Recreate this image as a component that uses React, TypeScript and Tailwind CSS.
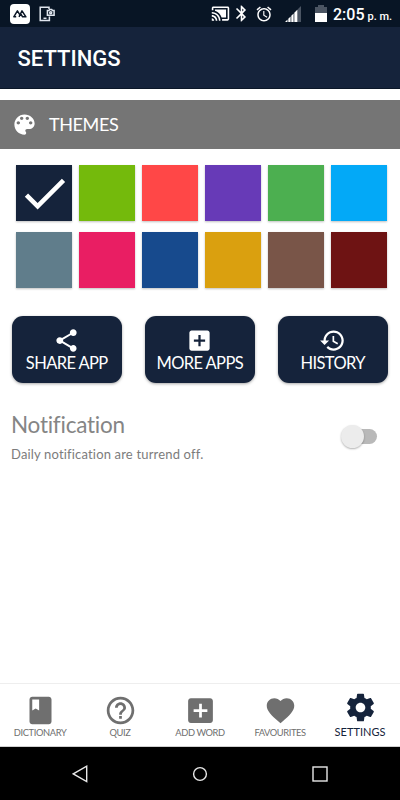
import React from "react";

const paths = {
  palette: "M12 3c-4.97 0-9 4.03-9 9s4.03 9 9 9c.83 0 1.5-.67 1.5-1.5 0-.39-.15-.74-.39-1.01-.23-.26-.38-.61-.38-.99 0-.83.67-1.5 1.5-1.5H16c2.76 0 5-2.24 5-5 0-4.42-4.03-8-9-8zm-5.5 9c-.83 0-1.5-.67-1.5-1.5S5.67 9 6.5 9 8 9.67 8 10.5 7.33 12 6.5 12zm3-4C8.67 8 8 7.33 8 6.5S8.67 5 9.5 5s1.5.67 1.5 1.5S10.33 8 9.5 8zm5 0c-.83 0-1.5-.67-1.5-1.5S13.67 5 14.5 5s1.5.67 1.5 1.5S15.33 8 14.5 8zm3 4c-.83 0-1.5-.67-1.5-1.5S16.67 9 17.5 9s1.5.67 1.5 1.5-.67 1.5-1.5 1.5z",
  share: "M18 16.08c-.76 0-1.44.3-1.96.77L8.91 12.7c.05-.23.09-.46.09-.7s-.04-.47-.09-.7l7.05-4.11c.54.5 1.25.81 2.04.81 1.66 0 3-1.34 3-3s-1.34-3-3-3-3 1.34-3 3c0 .24.04.47.09.7L8.04 9.81C7.5 9.31 6.79 9 6 9c-1.66 0-3 1.34-3 3s1.34 3 3 3c.79 0 1.5-.31 2.04-.81l7.12 4.16c-.05.21-.08.43-.08.65 0 1.61 1.31 2.92 2.92 2.92s2.92-1.31 2.92-2.92-1.31-2.92-2.92-2.92z",
  addBox: "M19 3H5c-1.11 0-2 .9-2 2v14c0 1.1.89 2 2 2h14c1.1 0 2-.9 2-2V5c0-1.1-.9-2-2-2zm-2 10h-4v4h-2v-4H7v-2h4V7h2v4h4v2z",
  history: "M13 3c-4.97 0-9 4.03-9 9H1l3.89 3.89.07.14L9 12H6c0-3.87 3.13-7 7-7s7 3.13 7 7-3.13 7-7 7c-1.93 0-3.68-.79-4.94-2.06l-1.42 1.42C8.27 19.99 10.51 21 13 21c4.97 0 9-4.03 9-9s-4.03-9-9-9zm-1 5v5l4.28 2.54.72-1.21-3.5-2.08V8H12z",
  book: "M18 2H6c-1.1 0-2 .9-2 2v16c0 1.1.9 2 2 2h12c1.1 0 2-.9 2-2V4c0-1.1-.9-2-2-2zM6 4h5v8l-2.5-1.5L6 12V4z",
  help: "M11 18h2v-2h-2v2zm1-16C6.48 2 2 6.48 2 12s4.48 10 10 10 10-4.48 10-10S17.52 2 12 2zm0 18c-4.41 0-8-3.59-8-8s3.59-8 8-8 8 3.59 8 8-3.59 8-8 8zm0-14c-2.21 0-4 1.79-4 4h2c0-1.1.9-2 2-2s2 .9 2 2c0 2-3 1.75-3 5h2c0-2.25 3-2.5 3-5 0-2.21-1.79-4-4-4z",
  heart: "M12 21.35l-1.45-1.32C5.4 15.36 2 12.28 2 8.5 2 5.42 4.42 3 7.5 3c1.74 0 3.41.81 4.5 2.09C13.09 3.81 14.76 3 16.5 3 19.58 3 22 5.42 22 8.5c0 3.78-3.4 6.86-8.55 11.54L12 21.35z",
  settings: "M19.43 12.98c.04-.32.07-.64.07-.98s-.03-.66-.07-.98l2.11-1.65c.19-.15.24-.42.12-.64l-2-3.46c-.12-.22-.39-.3-.61-.22l-2.49 1c-.52-.4-1.08-.73-1.69-.98l-.38-2.65C14.46 2.18 14.25 2 14 2h-4c-.25 0-.46.18-.49.42l-.38 2.65c-.61.25-1.17.59-1.69.98l-2.49-1c-.23-.09-.49 0-.61.22l-2 3.46c-.13.22-.07.49.12.64l2.11 1.65c-.04.32-.07.65-.07.98s.03.66.07.98l-2.11 1.65c-.19.15-.24.42-.12.64l2 3.46c.12.22.39.3.61.22l2.49-1c.52.4 1.08.73 1.69.98l.38 2.65c.03.24.24.42.49.42h4c.25 0 .46-.18.49-.42l.38-2.65c.61-.25 1.17-.59 1.69-.98l2.49 1c.23.09.49 0 .61-.22l2-3.46c.12-.22.07-.49-.12-.64l-2.11-1.65zM12 15.5c-1.93 0-3.5-1.57-3.5-3.5s1.57-3.5 3.5-3.5 3.5 1.57 3.5 3.5-1.57 3.5-3.5 3.5z",
  check: "M9 16.17L4.83 12l-1.42 1.41L9 19 21 7l-1.41-1.41z",
  cast: "M1 18v3h3c0-1.66-1.34-3-3-3zm0-4v2c2.76 0 5 2.24 5 5h2c0-3.87-3.13-7-7-7zm18-7H5v1.63c3.96 1.28 7.09 4.41 8.37 8.37H19V7zM1 10v2c4.97 0 9 4.03 9 9h2c0-6.08-4.93-11-11-11zm20-7H3c-1.1 0-2 .9-2 2v3h2V5h18v14h-7v2h7c1.1 0 2-.9 2-2V5c0-1.1-.9-2-2-2z",
  bluetooth: "M17.71 7.71L12 2h-1v7.59L6.41 5 5 6.41 10.59 12 5 17.59 6.41 19 11 14.41V22h1l5.71-5.71-4.3-4.29 4.3-4.29zM13 5.83l1.88 1.88L13 9.59V5.83zm1.88 10.46L13 18.17v-3.76l1.88 1.88z",
  alarm: "M22 5.72l-4.6-3.86-1.29 1.53 4.6 3.86L22 5.72zM7.88 3.39L6.6 1.86 2 5.71l1.29 1.53 4.59-3.85zM12.5 8H11v6l4.75 2.85.75-1.23-4-2.37V8zM12 4c-4.97 0-9 4.03-9 9s4.02 9 9 9c4.97 0 9-4.03 9-9s-4.03-9-9-9zm0 16c-3.87 0-7-3.13-7-7s3.13-7 7-7 7 3.13 7 7-3.13 7-7 7z",
};

function Icon({ name, className }: { name: keyof typeof paths; className: string }) {
  return (
    <svg viewBox="0 0 24 24" fill="currentColor" className={`block shrink-0 ${className}`}>
      <path d={paths[name]} />
    </svg>
  );
}

function StatusBar() {
  return (
    <div className="flex h-[27px] shrink-0 items-center bg-[#081525] pl-[10px] text-white">
      <svg viewBox="0 0 20 20" className="h-5 w-5 shrink-0">
        <rect width="20" height="20" rx="4" fill="#fff" />
        <path d="M6.2 12.8H3.8L7.4 6.9L9.6 10.4M9 12.8L12 6.9L15.9 12.8H12.6L10.6 9.6" fill="none" stroke="#0b1626" strokeWidth="1.5" strokeLinejoin="round" />
      </svg>
      <svg viewBox="0 0 16 16" className="ml-[9px] h-4 w-4 shrink-0" fill="none" stroke="#dfe5ee" strokeWidth="1.5">
        <path d="M10 3V1.2H1.2V14.6H10.4V10.5" />
        <path d="M4.5 12.3H7.5" />
        <path d="M8.4 4.4H10L10.7 3.4H12.7L13.4 4.4H15.1V9.3H8.4Z" />
        <circle cx="11.7" cy="6.8" r="1" />
      </svg>
      <Icon name="cast" className="ml-[156px] h-[19px] w-[19px]" />
      <Icon name="bluetooth" className="ml-[2px] h-[19px] w-[19px]" />
      <Icon name="alarm" className="ml-[4px] h-[18px] w-[18px]" />
      <svg viewBox="0 0 16 16" className="ml-[12px] h-4 w-4 shrink-0">
        <path d="M13 3L16 0V16H13Z" fill="#4b5563" />
        <path d="M0 16L2.5 13.5V16ZM3.3 12.7L5.6 10.4V16H3.3ZM6.3 9.7L8.6 7.4V16H6.3ZM9.3 6.7L12.5 3.5V16H9.3Z" fill="#fff" />
      </svg>
      <svg viewBox="0 0 12 17" className="ml-[14px] h-[17px] w-3 shrink-0">
        <path d="M0 2H3V0H9V2H12V8H0Z" fill="#4b5563" />
        <path d="M0 8H12V17H0Z" fill="#fff" />
      </svg>
      <span className="ml-[6px] mt-[2px] whitespace-nowrap font-['Roboto'] text-[16px] font-medium leading-none">2:05</span>
      <span className="ml-[3px] mt-[5px] whitespace-nowrap font-['Roboto'] text-[11px] font-medium leading-none">p. m.</span>
    </div>
  );
}

const swatches = [
  "bg-[#15233b]", "bg-[#74ba0c]", "bg-[#ff4747]", "bg-[#673ab7]", "bg-[#4caf50]", "bg-[#03a9f7]",
  "bg-[#607d8b]", "bg-[#e91e63]", "bg-[#174a8d]", "bg-[#daa00f]", "bg-[#795548]", "bg-[#6e1313]",
];

const actions: { icon: keyof typeof paths; label: string }[] = [
  { icon: "share", label: "SHARE APP" },
  { icon: "addBox", label: "MORE APPS" },
  { icon: "history", label: "HISTORY" },
];

const tabs: { icon: keyof typeof paths; label: string; text: string }[] = [
  { icon: "book", label: "DICTIONARY", text: "tracking-[-0.35px]" },
  { icon: "help", label: "QUIZ", text: "tracking-[-0.4px]" },
  { icon: "addBox", label: "ADD WORD", text: "tracking-[-0.4px]" },
  { icon: "heart", label: "FAVOURITES", text: "tracking-[-0.4px]" },
];

export default function App() {
  return (
    <div className="flex h-[800px] w-[400px] flex-col overflow-hidden bg-white font-['Lato',sans-serif] [font-variant-ligatures:none]">
      <StatusBar />
      <header className="flex h-[61.5px] shrink-0 items-center border-b border-[#0b1728] bg-[#15233b] pl-[17.5px] pt-[4px]">
        <h1 className="font-['Roboto'] text-[22px] font-medium leading-none text-white">SETTINGS</h1>
      </header>
      <section className="mt-[11.5px] flex h-[49px] shrink-0 items-center bg-[#757575] text-white">
        <Icon name="palette" className="ml-[11px] h-[27px] w-[27px]" />
        <span className="-mt-[2px] ml-[11px] text-[18px] leading-none tracking-[-0.4px]">THEMES</span>
      </section>
      <div className="mt-4 grid grid-cols-[repeat(6,56px)] gap-x-[7px] gap-y-[11px] pl-4">
        {swatches.map((color, i) => (
          <div key={color} className={`flex h-14 items-center justify-center shadow-[0_1px_2px_rgba(0,0,0,0.25)] ${color}`}>
            {i === 0 && <Icon name="check" className="h-[55px] w-[55px] text-white" />}
          </div>
        ))}
      </div>
      <div className="mt-[27.5px] flex gap-[22.5px] pl-[11.5px]">
        {actions.map((a) => (
          <button key={a.label} className="flex h-[67.5px] w-[110.5px] flex-col items-center rounded-[11px] bg-[#15233b] pt-[11px] text-white shadow-[0_1px_3px_rgba(0,0,0,0.35)]">
            <Icon name={a.icon} className="h-[27px] w-[27px]" />
            <span className="whitespace-nowrap text-[16.5px] leading-[18px] tracking-[-0.6px]">{a.label}</span>
          </button>
        ))}
      </div>
      <div className="mt-[26.5px] flex justify-between pl-[11px] pr-[23px]">
        <div className="text-[#7c7c7c]">
          <h2 className="text-[22.5px] leading-[30px] tracking-[-0.25px] text-[#858585]">Notification</h2>
          <p className="mt-[6px] text-[13px] leading-[16px] tracking-[0.17px]">Daily notification are turrend off.</p>
        </div>
        <div className="mt-[15px] flex h-[23px] items-center">
          <div className="flex h-[15px] w-[33px] items-center rounded-full bg-[#b9b9b9]">
            <div className="-ml-[3px] h-[23px] w-[23px] shrink-0 rounded-full bg-[#ececec] shadow-[0_1px_2px_rgba(0,0,0,0.3)]" />
          </div>
        </div>
      </div>
      <nav className="mt-auto grid h-[64px] shrink-0 grid-cols-[repeat(5,80px)] border-b border-t border-b-[#d0d0d0] border-t-[#eeeeee]">
        {tabs.map((t) => (
          <div key={t.label} className="flex flex-col items-center pt-[9.5px] text-[#6f6f6f]">
            <Icon name={t.icon} className="h-[33px] w-[33px]" />
            <span className={`whitespace-nowrap text-[9.3px] leading-[11px] ${t.text}`}>{t.label}</span>
          </div>
        ))}
        <div className="flex flex-col items-center pt-[7px] text-[#15233b]">
          <Icon name="settings" className="h-[33px] w-[33px]" />
          <span className="mt-px whitespace-nowrap text-[11px] leading-[14px]">SETTINGS</span>
        </div>
      </nav>
      <footer className="flex h-[53px] shrink-0 items-center bg-black">
        <svg viewBox="0 0 16 18" className="ml-[72px] h-[18px] w-4" fill="none" stroke="#e8e8e8" strokeWidth="1.4">
          <path d="M14.7 1.2V16.6L1.3 8.9Z" />
        </svg>
        <svg viewBox="0 0 16 16" className="ml-[104px] h-4 w-4" fill="none" stroke="#e8e8e8" strokeWidth="1.4">
          <circle cx="8" cy="8" r="6.4" />
        </svg>
        <svg viewBox="0 0 16 16" className="ml-[104px] h-4 w-4" fill="none" stroke="#e8e8e8" strokeWidth="1.4">
          <rect x="1" y="1" width="14" height="14" />
        </svg>
      </footer>
    </div>
  );
}
